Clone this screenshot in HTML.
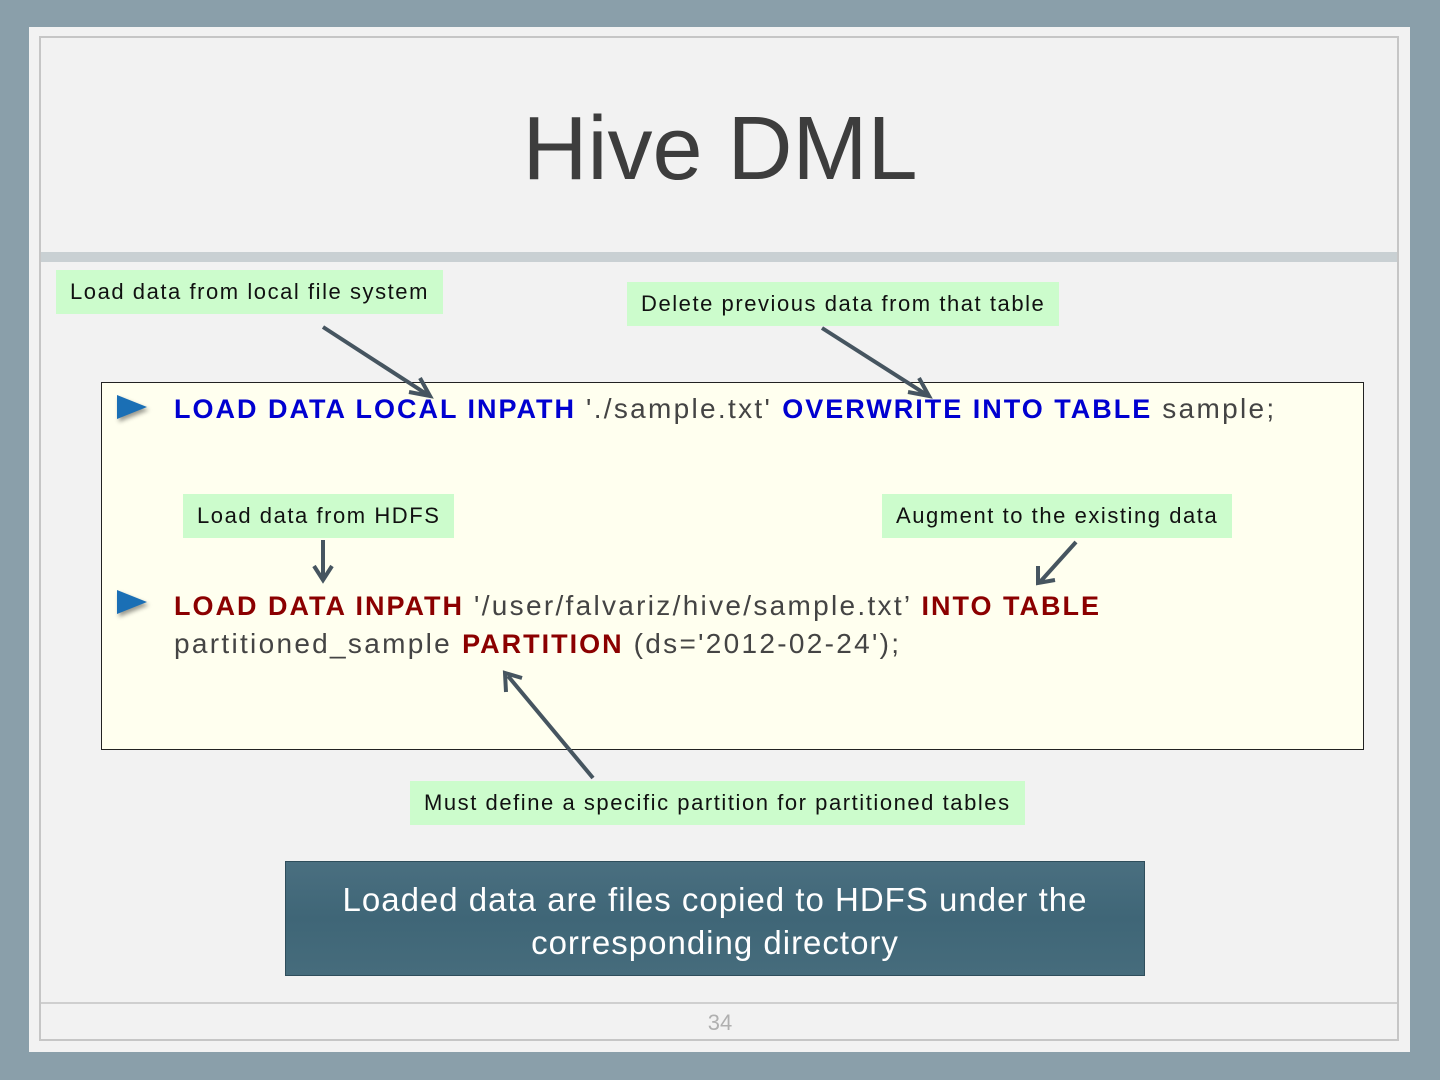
<!DOCTYPE html>
<html><head><meta charset="utf-8"><style>
*{margin:0;padding:0;box-sizing:border-box}
body{width:1440px;height:1080px;background:#8a9faa;position:relative;overflow:hidden;font-family:"Liberation Sans",sans-serif}
.panel{position:absolute;left:29px;top:27px;width:1381px;height:1025px;background:#f2f2f2}
.inner{position:absolute;left:39px;top:36px;width:1360px;height:1005px;border:2px solid #c6c6c6}
.band{position:absolute;left:41px;top:252px;width:1356px;height:10px;background:#c9d0d3}
.foot{position:absolute;left:41px;top:1002px;width:1356px;height:2px;background:#cfcfcf}
.title{position:absolute;left:0;width:1440px;top:98px;text-align:center;font-size:90px;color:#3d3d3d}
.note{position:absolute;background:#ccfccc;color:#111;font-size:22px;line-height:44px;padding:0 14px;white-space:nowrap;letter-spacing:1.55px}
.box{position:absolute;left:101px;top:382px;width:1263px;height:368px;background:#ffffef;border:1px solid #222}
.line{position:absolute;font-size:28px;color:#444;white-space:nowrap;letter-spacing:2.3px}
.b{color:#0000d0;font-weight:bold;font-size:27px;letter-spacing:2px}
.r{color:#8b0000;font-weight:bold;font-size:27px;letter-spacing:2px}
.bul{position:absolute;width:0;height:0;border-top:12px solid transparent;border-bottom:12px solid transparent;border-left:30px solid #1a6fb5;filter:drop-shadow(2px 3px 2px rgba(0,0,0,.4))}
.blue{position:absolute;left:285px;top:861px;width:860px;height:115px;background:linear-gradient(#4a6f80,#3f6677 50%,#466c7c);border:1px solid #2f4e5c;color:#fff;font-size:33px;text-align:center;line-height:43px;padding-top:16px;letter-spacing:1px}
.num{position:absolute;left:0;width:1440px;top:1010px;text-align:center;color:#b0b0b0;font-size:22px}
</style></head><body>
<div class="panel"></div><div class="inner"></div><div class="band"></div><div class="foot"></div>
<div class="title">Hive DML</div>
<div class="note" style="left:56px;top:270px">Load data from local file system</div>
<div class="note" style="left:627px;top:282px">Delete previous data from that table</div>
<div class="box"></div>
<div class="bul" style="left:117px;top:395px"></div>
<div class="line" style="left:174px;top:393px"><span class="b">LOAD DATA LOCAL INPATH</span> './sample.txt' <span class="b">OVERWRITE INTO TABLE</span> sample;</div>
<div class="note" style="left:183px;top:494px">Load data from HDFS</div>
<div class="note" style="left:882px;top:494px">Augment to the existing data</div>
<div class="bul" style="left:117px;top:590px"></div>
<div class="line" style="left:174px;top:587px;line-height:38px"><span class="r">LOAD DATA INPATH</span> '/user/falvariz/hive/sample.txt’ <span class="r">INTO TABLE</span><br>partitioned_sample <span class="r">PARTITION</span> (ds='2012-02-24');</div>
<div class="note" style="left:410px;top:781px">Must define a specific partition for partitioned tables</div>
<svg style="position:absolute;left:0;top:0" width="1440" height="1080" fill="none" stroke="#465560" stroke-width="4">
<path d="M323 327 L428 395 M409 392 L430 396 L420 378"/>
<path d="M822 328 L927 395 M908 392 L929 396 L919 378"/>
<path d="M323 540 V578 M314 566 L323 580 L332 566"/>
<path d="M1076 542 L1040 582 M1038 566 L1038 583 L1055 580"/>
<path d="M593 778 L508 676 M506 692 L505 673 L522 678"/>
</svg>
<div class="blue">Loaded data are files copied to HDFS under the<br>corresponding directory</div>
<div class="num">34</div>
</body></html>
